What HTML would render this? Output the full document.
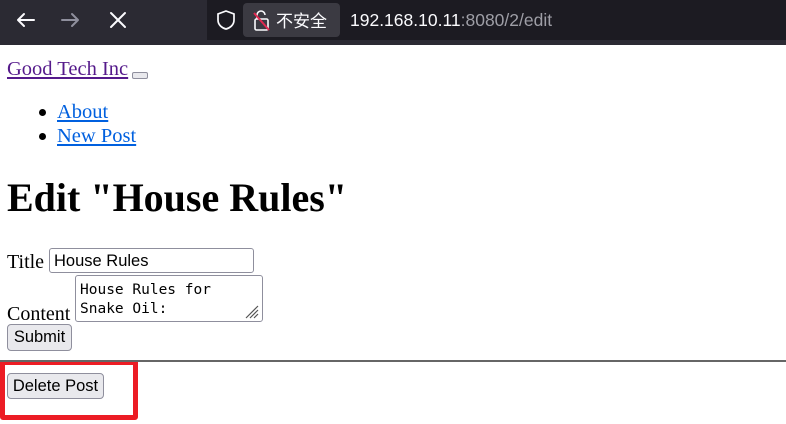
<!DOCTYPE html>
<html><head><style>
body{margin:0;width:786px;height:424px;overflow:hidden;background:#fff;position:relative;font-family:"Liberation Serif",serif;}
.a{position:absolute;}
.bar{left:0;top:0;width:786px;height:45px;background:#2b2a33;}
.url{left:207px;top:0;width:579px;height:40px;background:#1c1b22;}
.chip{left:243px;top:3px;width:97px;height:34px;background:#3b3a42;border-radius:4px;}
.t{font-size:20px;line-height:22px;}
a{color:#0000ee;}
.btn{font-family:"Liberation Sans",sans-serif;font-size:16.5px;background:#e9e9ed;border:1px solid #8f8f9d;border-radius:4px;box-sizing:border-box;color:#000;}
</style></head><body>
<div class="a bar"></div>
<div class="a url"></div>
<div class="a chip"></div>
<svg class="a" style="left:0;top:0" width="240" height="45">
<g stroke="#fbfbfe" stroke-width="2" fill="none" stroke-linecap="round">
<path d="M18 20h16M18 20l6-6M18 20l6 6"/>
<path d="M62 20h16M78 20l-6-6M78 20l-6 6" stroke="#8f8f9d"/>
<path d="M111 13l14 14M125 13l-14 14"/>
<path d="M226 11l8 3v6c0 5-4 8-8 9-4-1-8-4-8-9v-6z" stroke-width="1.7"/>
</g></svg>
<svg class="a" style="left:252px;top:9px" width="20" height="24"><g fill="none" stroke="#fbfbfe" stroke-width="1.6"><path d="M5 10V6a4 4 0 0 1 8 0"/><rect x="3" y="10" width="13" height="11" rx="1.5"/></g><path d="M2 4l15 17" stroke="#e22850" stroke-width="2"/></svg>
<div class="a" style="left:276px;top:9px;color:#fbfbfe;font:17px 'Noto Sans CJK SC',sans-serif;line-height:22px">不安全</div>
<div class="a" style="left:350px;top:9px;color:#fbfbfe;font:17.5px 'Liberation Sans',sans-serif;line-height:22px">192.168.10.11<span style="color:#9e9ea6">:8080/2/edit</span></div>
<div class="a t" style="left:7px;top:58px;font-size:20.5px"><a style="color:#551a8b" href="#">Good Tech Inc</a></div>
<div class="a" style="left:132px;top:72px;width:14px;height:5px;background:#e9e9ed;border:1px solid #8f8f9d;border-radius:2px"></div>
<div class="a" style="left:39px;top:109px;width:7px;height:7px;border-radius:50%;background:#000"></div>
<div class="a t" style="left:57px;top:101px;font-size:20.5px"><a href="#" style="color:#0060df">About</a></div>
<div class="a" style="left:39px;top:133px;width:7px;height:7px;border-radius:50%;background:#000"></div>
<div class="a t" style="left:57px;top:125px;font-size:20.5px"><a href="#" style="color:#0060df">New Post</a></div>
<div class="a" style="left:7px;top:175px;font-size:40px;font-weight:bold;line-height:46px">Edit "House Rules"</div>
<div class="a t" style="left:7px;top:251px">Title</div>
<div class="a" style="left:49px;top:248px;width:205px;height:25px;border:1px solid #8f8f9d;border-radius:3px;box-sizing:border-box;font:16.5px 'Liberation Sans',sans-serif;padding:3px 4px;line-height:18px">House Rules</div>
<div class="a t" style="left:7px;top:303px">Content</div>
<div class="a" style="left:75px;top:275px;width:188px;height:47px;border:1px solid #8f8f9d;border-radius:3px;box-sizing:border-box;font:14.5px 'DejaVu Sans Mono',monospace;padding:5px 4px;line-height:19px;white-space:pre">House Rules for
Snake Oil:</div>
<svg class="a" style="left:242px;top:303px" width="18" height="16"><g stroke="#555" stroke-width="1.2"><path d="M4 15L16 3M8 15L16 7M12 15l4-4"/></g></svg>
<div class="a btn" style="left:7px;top:324px;width:65px;height:27px;text-align:center;line-height:25px">Submit</div>
<div class="a" style="left:0;top:360px;width:786px;height:2px;background:#666"></div>
<div class="a" style="left:0;top:362px;width:138px;height:58px;border:5px solid #ec1c24;border-top-width:3px;box-sizing:border-box;border-radius:0 0 3px 3px"></div>
<div class="a btn" style="left:7px;top:373px;width:97px;height:26px;text-align:center;line-height:24px">Delete Post</div>
</body></html>
